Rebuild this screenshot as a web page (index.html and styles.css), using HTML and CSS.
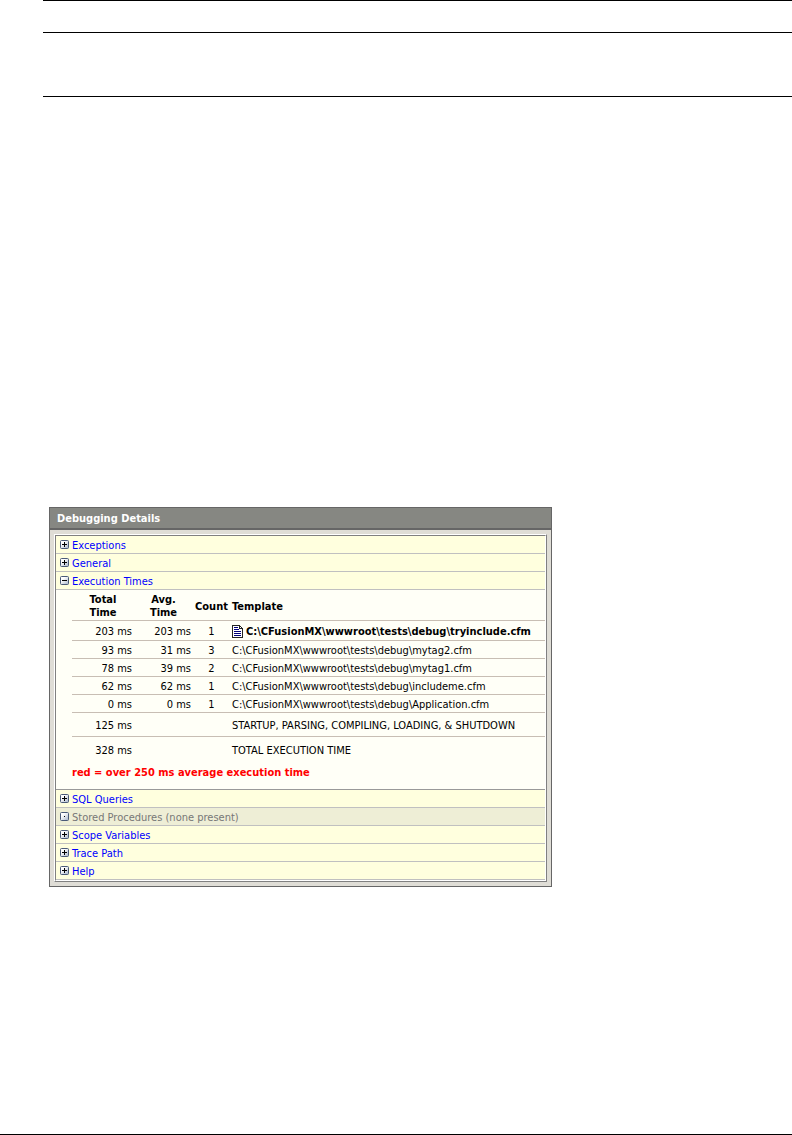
FILE: index.html
```html
<!DOCTYPE html>
<html lang="en">
<head>
    <meta charset="UTF-8">
    <meta name="viewport" content="width=device-width, initial-scale=1.0">
    <title>Debugging Details</title>
    <link rel="stylesheet" href="styles.css">
</head>
<body>
    <header class="page-header">
        <hr>
        <hr class="rule-title">
        <hr class="rule-section">
    </header>

    <main class="panel">
        <h1 class="panel-title">Debugging Details</h1>
        <div class="panel-body">
            <div class="panel-inner">
                <a class="row" href="#exceptions"><svg class="toggle"><use href="#plus"/></svg>Exceptions</a>
                <a class="row" href="#general"><svg class="toggle"><use href="#plus"/></svg>General</a>
                <a class="row" href="#times"><svg class="toggle"><use href="#minus"/></svg>Execution Times</a>
                <section class="details" id="times">
                    <table class="times">
                        <thead>
                            <tr>
                                <th class="col-total">Total<br>Time</th>
                                <th class="col-avg">Avg.<br>Time</th>
                                <th class="col-count">Count</th>
                                <th class="template">Template</th>
                            </tr>
                        </thead>
                        <tbody>
                            <tr class="main-file">
                                <td>203 ms</td>
                                <td>203 ms</td>
                                <td class="count">1</td>
                                <td class="template"><svg class="file"><use href="#file"/></svg><b>C:\CFusionMX\wwwroot\tests\debug\tryinclude.cfm</b></td>
                            </tr>
                            <tr>
                                <td>93 ms</td>
                                <td>31 ms</td>
                                <td class="count">3</td>
                                <td class="template">C:\CFusionMX\wwwroot\tests\debug\mytag2.cfm</td>
                            </tr>
                            <tr>
                                <td>78 ms</td>
                                <td>39 ms</td>
                                <td class="count">2</td>
                                <td class="template">C:\CFusionMX\wwwroot\tests\debug\mytag1.cfm</td>
                            </tr>
                            <tr>
                                <td>62 ms</td>
                                <td>62 ms</td>
                                <td class="count">1</td>
                                <td class="template">C:\CFusionMX\wwwroot\tests\debug\includeme.cfm</td>
                            </tr>
                            <tr>
                                <td>0 ms</td>
                                <td>0 ms</td>
                                <td class="count">1</td>
                                <td class="template">C:\CFusionMX\wwwroot\tests\debug\Application.cfm</td>
                            </tr>
                        </tbody>
                        <tfoot>
                            <tr>
                                <td>125 ms</td>
                                <td></td>
                                <td></td>
                                <td class="template">STARTUP, PARSING, COMPILING, LOADING, &amp; SHUTDOWN</td>
                            </tr>
                            <tr>
                                <td>328 ms</td>
                                <td></td>
                                <td></td>
                                <td class="template">TOTAL EXECUTION TIME</td>
                            </tr>
                        </tfoot>
                    </table>
                    <p class="warning">red = over 250 ms average execution time</p>
                </section>
                <a class="row" href="#queries"><svg class="toggle"><use href="#plus"/></svg>SQL Queries</a>
                <div class="row row-empty"><svg class="toggle"><use href="#dot"/></svg>Stored Procedures (none present)</div>
                <a class="row" href="#scope"><svg class="toggle"><use href="#plus"/></svg>Scope Variables</a>
                <a class="row" href="#trace"><svg class="toggle"><use href="#plus"/></svg>Trace Path</a>
                <a class="row" href="#help"><svg class="toggle"><use href="#plus"/></svg>Help</a>
            </div>
        </div>
    </main>

    <footer class="page-footer">
        <hr>
    </footer>

    <!-- toggle and file icons, used by the rows above -->
    <svg class="sprite" aria-hidden="true">
        <defs>
            <linearGradient id="face" x1="0" y1="0" x2="1" y2="1">
                <stop offset="0.3" stop-color="#ffffff"/>
                <stop offset="1" stop-color="#a4b2c8"/>
            </linearGradient>
        </defs>
        <symbol id="box" viewBox="0 0 9 9">
            <rect x="0.5" y="0.5" width="8" height="8" rx="1" fill="url(#face)" stroke="#4a5a78"/>
        </symbol>
        <symbol id="plus" viewBox="0 0 9 9">
            <use href="#box"/>
            <path d="M2 4h5v1H2zM4 2h1v5H4z" fill="#000"/>
        </symbol>
        <symbol id="minus" viewBox="0 0 9 9">
            <use href="#box"/>
            <path d="M2 4h5v1H2z" fill="#000"/>
        </symbol>
        <symbol id="dot" viewBox="0 0 9 9">
            <use href="#box"/>
            <path d="M4 4h1v1H4z" fill="#000"/>
        </symbol>
        <symbol id="file" viewBox="0 0 11 13">
            <path d="M0 0h8v1h1v1h1v1h1v10H0z" fill="#222"/>
            <path d="M1 1h6v3h3v8H1z" fill="#fff"/>
            <path d="M8 2h1v1H8z" fill="#fff"/>
            <path d="M2 2h4v1H2zM2 4h5v1H2zM2 6h7v1H2zM2 8h7v1H2zM2 10h7v1H2z" fill="#00007a"/>
        </symbol>
    </svg>
</body>
</html>
```
FILE: styles.css
```css
* {
    box-sizing: border-box;
}

body {
    font-family: Tahoma, "DejaVu Sans Condensed", "DejaVu Sans", sans-serif;
    font-size: 11px;
    line-height: 13px;
    margin: 0;
    min-height: 100vh;
    display: flex;
    flex-direction: column;
    background-color: #fff;
    color: #000;
}

.sprite {
    width: 0;
    height: 0;
}

hr {
    border: none;
    height: 1px;
    margin: 0;
    background-color: #000;
}

.page-header {
    margin-left: 43px;
    margin-bottom: 410px;
}

.rule-title {
    margin-top: 31px;
}

.rule-section {
    margin-top: 63px;
}

.page-footer {
    margin-top: auto;
}

.panel {
    width: calc(100% - 49px);
    max-width: 503px;
    margin-left: 49px;
    border: 1px solid #666;
    background-color: #dfddd6;
}

.panel-title {
    margin: 0;
    padding: 4px 7px 3px;
    font-size: 11px;
    line-height: 13px;
    color: #fff;
    background-color: #868782;
    border-bottom: 2px solid #666;
}

.panel-body {
    margin: 4px;
    border: 1px solid #808080;
    border-top-color: #fff;
    border-left-color: #fff;
}

.panel-inner {
    border: 1px solid #fff;
    border-top-color: #808080;
    border-left-color: #808080;
    background-color: #fffff7;
}

.row {
    display: flex;
    align-items: flex-start;
    gap: 3px;
    height: 18px;
    padding: 3px 0 0 4px;
    border-bottom: 1px solid #c0c0c0;
    background-color: #ffffde;
    color: #00f;
    text-decoration: none;
}

.row-empty {
    background-color: #eeeed6;
    color: #777;
}

.toggle {
    width: 9px;
    height: 9px;
    margin-top: 1px;
}

.details {
    padding-left: 16px;
    border-bottom: 1px solid #999;
}

.times {
    width: 100%;
    table-layout: fixed;
    border-collapse: separate;
    border-spacing: 0;
}

.times th,
.times td {
    height: 18px;
    padding: 2px 2px 0;
    text-align: right;
    white-space: nowrap;
    border-bottom: 1px solid #c8beb4;
}

.times th {
    height: 31px;
    text-align: center;
}

.col-total {
    width: 62px;
}

.col-avg {
    width: 59px;
}

.col-count {
    width: 37px;
}

.times .main-file td {
    height: 20px;
}

.times .count {
    text-align: center;
}

.times .template {
    text-align: left;
}

.times tfoot td {
    height: 24px;
}

.times tfoot tr:last-child td {
    border-bottom: none;
}

.file {
    width: 11px;
    height: 13px;
    margin-right: 3px;
    vertical-align: text-bottom;
}

.warning {
    margin: 0;
    padding: 5px 0 10px;
    font-weight: bold;
    color: #f00;
}
```
